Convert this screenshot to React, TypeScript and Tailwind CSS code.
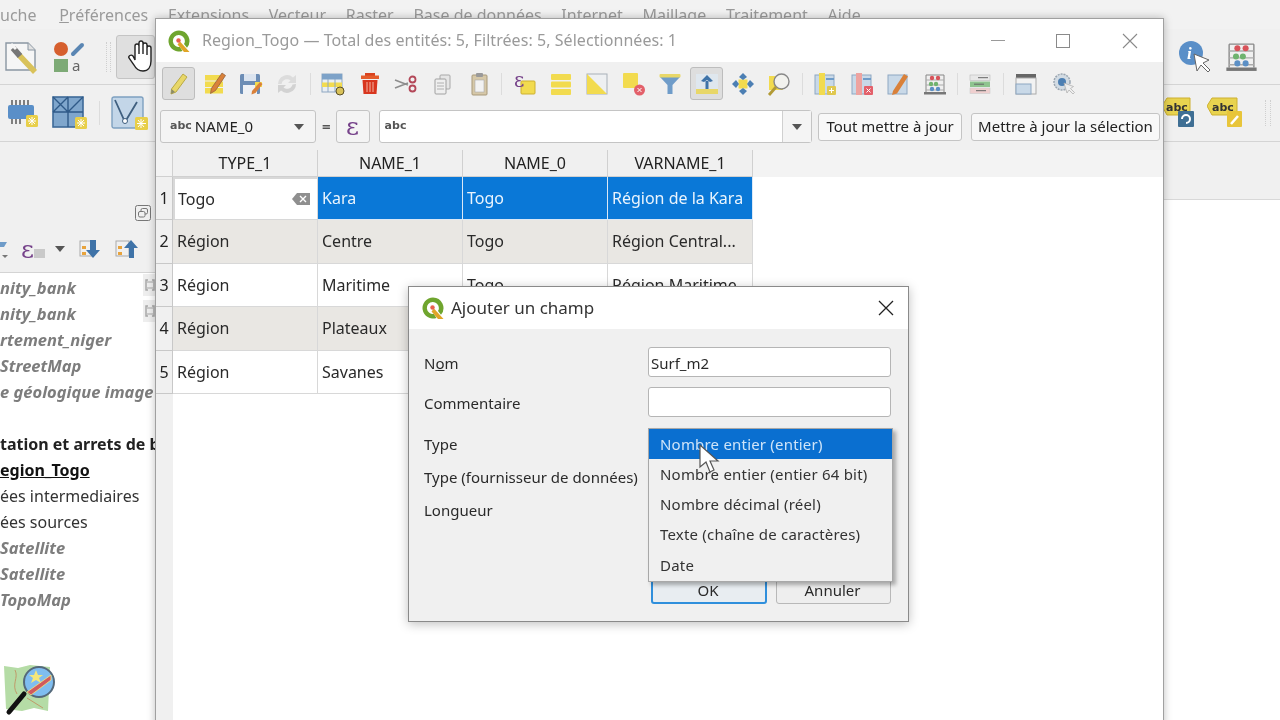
import type { ReactNode } from 'react';

const FONT = "font-['Noto_Sans','Open_Sans',sans-serif]";

function QgisLogo({ size }: { size: number }) {
  return (
    <svg width={size} height={size} viewBox="0 0 24 24" className="shrink-0">
      <path d="M12 1.5a10.5 10.5 0 1 0 3.5 20.4l-2.6-4a6 6 0 1 1 5-5.9c0 1.2-.3 2.2-.9 3.1l3 3.6A10.5 10.5 0 0 0 12 1.5Z" fill="#6fa52e" />
      <path d="M13 12.5l9.5 10.5h-5.5l-6.5-7.5Z" fill="#e0a526" />
      <circle cx="11.5" cy="11.5" r="2.2" fill="#e8604c" />
    </svg>
  );
}

function Ico({ w = 24, children }: { w?: number; children: ReactNode }) {
  return (
    <svg width={w} height={w} viewBox="0 0 24 24" className="shrink-0">
      {children}
    </svg>
  );
}

const Pencil = () => (
  <Ico>
    <path d="M17 2l4 3-11 15-5 2 .5-5Z" fill="#e8d768" stroke="#b9a945" strokeWidth="1" />
    <path d="M5.5 17l3.5 3-4 2Z" fill="#8a8a6a" />
  </Ico>
);
const EditRows = () => (
  <Ico>
    <rect x="2" y="3" width="18" height="5.5" fill="#f2db4f" />
    <rect x="2" y="9.5" width="18" height="5.5" fill="#f2db4f" />
    <rect x="2" y="16" width="18" height="5.5" fill="#f2db4f" />
    <path d="M19 1l3.5 2.5-10 15-5 3 .8-5Z" fill="#d9813a" stroke="#8a5a3a" strokeWidth="0.7" />
  </Ico>
);
const SaveEdit = () => (
  <Ico>
    <rect x="1" y="2" width="20" height="20" rx="1.5" fill="#6c8db5" />
    <rect x="5" y="2" width="12" height="7" fill="#dbe4ef" />
    <rect x="4" y="13" width="14" height="9" fill="#eef1f5" />
    <rect x="16" y="10" width="7" height="5" fill="#f2db4f" />
    <path d="M21 10l2.5 2-7 9-4 1.5.5-3.5Z" fill="#d9813a" />
  </Ico>
);
const Reload = () => (
  <Ico>
    <path d="M3 12a9 9 0 0 1 15-6.5l3-2.500v8h-8l2.500-2.500A5.500 5.500 0 0 0 6.500 12Z" fill="#dcdcdc" />
    <path d="M21 12a9 9 0 0 1-15 6.500l-3 2.500v-8h8l-2.500 2.500a5.500 5.500 0 0 0 9-3Z" fill="#d2d2d2" />
  </Ico>
);
const NewFeature = () => (
  <Ico>
    <rect x="1" y="2" width="20" height="18" fill="#e9eef3" stroke="#8ea7c2" />
    <rect x="1" y="2" width="20" height="5.5" fill="#7da2c8" />
    <rect x="1" y="10.5" width="20" height="4.5" fill="#f2db4f" />
    <path d="M7 7v13M14 7v13" stroke="#8ea7c2" />
    <circle cx="19" cy="19" r="4" fill="#d9c25a" stroke="#5a4f25" />
  </Ico>
);
const Trash = () => (
  <Ico>
    <rect x="7" y="1" width="10" height="3" fill="#d9421f" />
    <rect x="3" y="3.5" width="18" height="3.5" fill="#e45c2c" />
    <path d="M4.5 8h15l-1 14h-13Z" fill="#d8361f" />
    <path d="M9 10v10M12 10v10M15 10v10" stroke="#f3b5a5" />
  </Ico>
);
const Scissors = () => (
  <Ico>
    <path d="M1 8l13 5M1 16l13-5" stroke="#8d8d8d" strokeWidth="1.6" />
    <circle cx="18.5" cy="7.5" r="3" fill="none" stroke="#b34758" strokeWidth="1.8" />
    <circle cx="18.5" cy="16.5" r="3" fill="none" stroke="#b34758" strokeWidth="1.8" />
  </Ico>
);
const Copy = () => (
  <Ico>
    <rect x="10" y="3" width="10" height="14" rx="1" fill="#e6e6e6" stroke="#a8a8a8" />
    <rect x="5" y="7" width="11" height="15" rx="1" fill="#efefef" stroke="#a0a0a0" />
    <path d="M7 11h7M7 14h7M7 17h7" stroke="#b0b0b0" />
  </Ico>
);
const Paste = () => (
  <Ico>
    <rect x="5" y="3" width="15" height="20" rx="1" fill="#d6c8a8" stroke="#a8997a" />
    <rect x="8" y="8" width="9" height="12" fill="#f2f2f2" stroke="#aaa" strokeWidth="0.6" />
    <rect x="9" y="1" width="7" height="4" rx="1" fill="#9a9a9a" />
  </Ico>
);
const Expr = () => (
  <Ico>
    <rect x="8" y="9" width="14" height="13" rx="1" fill="#f2db4f" stroke="#cdb030" />
    <text x="1" y="15" fontSize="20" fontFamily="DejaVu Serif, serif" fill="#76428a">
      ε
    </text>
  </Ico>
);
const AllRows = () => (
  <Ico>
    <rect x="2" y="2" width="20" height="6" rx="1" fill="#f2db4f" />
    <rect x="2" y="9.5" width="20" height="6" rx="1" fill="#f2db4f" />
    <rect x="2" y="17" width="20" height="6" rx="1" fill="#f2db4f" />
  </Ico>
);
const Invert = () => (
  <Ico>
    <rect x="2" y="2" width="20" height="20" fill="#eef0f2" stroke="#a8b0b8" />
    <path d="M2 2l20 20H2Z" fill="#f2db4f" />
  </Ico>
);
const Deselect = () => (
  <Ico>
    <rect x="1" y="1" width="15" height="15" rx="1" fill="#f2db4f" />
    <circle cx="17.5" cy="18" r="5.5" fill="#e3606a" />
    <path d="M15.5 16l4 4M19.5 16l-4 4" stroke="#fff" />
  </Ico>
);
const Funnel = () => (
  <Ico>
    <path d="M2 5h20l-7.5 8v9h-5v-9Z" fill="#6f9cc9" />
    <rect x="1.5" y="2" width="21" height="3.5" rx="1" fill="#e8d768" />
  </Ico>
);
const MoveTop = () => (
  <Ico>
    <rect x="1" y="2" width="22" height="20" fill="#dfe7ee" />
    <rect x="1" y="17" width="22" height="5" fill="#e8d768" />
    <path d="M10.5 9h3v8h-3Z" fill="#3f73a8" />
    <path d="M12 3l6 6-3 1-3-2-3 2-3-1Z" fill="#3f73a8" />
  </Ico>
);
const PanTo = () => (
  <Ico>
    <rect x="7.5" y="7.5" width="9" height="9" fill="#f2db4f" />
    <path d="M12 1l4 4-4 3-4-3ZM12 23l-4-4 4-3 4 3ZM1 12l4-4 3 4-3 4ZM23 12l-4 4-3-4 3-4Z" fill="#4c7fb3" />
  </Ico>
);
const Zoom = () => (
  <Ico>
    <rect x="2" y="4" width="14" height="14" fill="#f2db4f" />
    <circle cx="14.5" cy="9.5" r="7.5" fill="#f2f2ee" stroke="#888" strokeWidth="1.4" />
    <path d="M9 15l-7 8" stroke="#b29a35" strokeWidth="2.8" />
  </Ico>
);
const Badge = ({ c }: { c: string }) => <rect x="14" y="14" width="9" height="9" rx="1" fill={c} />;
const NewField = () => (
  <Ico>
    <rect x="2" y="3" width="19" height="19" fill="#c9d9e8" stroke="#8ea7c2" />
    <rect x="6" y="1" width="6" height="22" fill="#f2db4f" />
    <path d="M13 7h8" stroke="#6f9cc9" strokeWidth="2" />
    <Badge c="#e0c84f" />
    <path d="M18.5 16v5M16 18.5h5" stroke="#fff" />
  </Ico>
);
const DelField = () => (
  <Ico>
    <rect x="2" y="3" width="19" height="19" fill="#c9d9e8" stroke="#8ea7c2" />
    <rect x="6" y="1" width="6" height="22" fill="#eda3a0" />
    <path d="M13 7h8" stroke="#6f9cc9" strokeWidth="2" />
    <Badge c="#e3606a" />
    <path d="M16.5 16.5l4 4M20.5 16.5l-4 4" stroke="#fff" />
  </Ico>
);
const Calc = () => (
  <Ico>
    <rect x="2" y="3" width="19" height="19" fill="#c9d9e8" stroke="#8ea7c2" />
    <path d="M7 19l11-17 4 2.5-11 17-5 1.5Z" fill="#d9813a" />
  </Ico>
);
const Abacus = ({ w = 24 }: { w?: number }) => (
  <Ico w={w}>
    <path d="M3 3v17M21 3v17M3 3h18" stroke="#888" fill="none" />
    <path d="M3 8h18M3 13h18M3 18h18" stroke="#aaa" />
    <circle cx="9" cy="6" r="2.2" fill="#d8535a" />
    <circle cx="15" cy="6" r="2.2" fill="#d8535a" />
    <circle cx="8" cy="12" r="2.2" fill="#6fb36f" />
    <circle cx="13" cy="12" r="2.2" fill="#6fb36f" />
    <circle cx="9" cy="17" r="2.2" fill="#5b8fc5" />
    <circle cx="15" cy="17" r="2.2" fill="#5b8fc5" />
    <rect x="1" y="20" width="22" height="2.5" fill="#777" />
  </Ico>
);
const Conditional = () => (
  <Ico>
    <rect x="2" y="3" width="20" height="5.5" fill="#e8e8e8" stroke="#bbb" strokeWidth="0.6" />
    <rect x="2" y="9.5" width="20" height="5.5" fill="#8fc48f" />
    <rect x="2" y="16" width="20" height="5.5" fill="#efcfcf" stroke="#ccc" strokeWidth="0.6" />
    <path d="M10 5.7h10M6 12.2h10M8 18.7h10" stroke="#666" />
  </Ico>
);
const Dock = () => (
  <Ico>
    <rect x="2" y="2" width="20" height="4" fill="#666" />
    <rect x="2" y="6" width="20" height="16" fill="#f2f2f2" stroke="#aaa" />
    <rect x="2" y="12" width="15" height="10" fill="#c9d9e8" stroke="#8ea7c2" />
  </Ico>
);
const Actions = () => (
  <Ico>
    <circle cx="11" cy="10" r="8" fill="#d2dbe3" stroke="#9aa5b0" strokeDasharray="2 1" strokeWidth="1.5" />
    <circle cx="11" cy="10" r="4" fill="#4c7fb3" />
    <path d="M13 11l3 10 2-3 4 4 1.5-1.5-4-4 3-2Z" fill="#eee" stroke="#aaa" strokeWidth="0.7" />
  </Ico>
);

// one toolbar cell of the attribute window
const Slot = ({ on, children }: { on?: boolean; children: ReactNode }) => (
  <div className="flex h-[33px] w-[36.4px] shrink-0 items-center justify-center">
    {on ? (
      <div className="flex h-[33px] w-[33px] items-center justify-center rounded-[3px] border border-[#bdbdbd] bg-[#dedede]">{children}</div>
    ) : (
      children
    )}
  </div>
);
const Sep = () => (
  <div className="flex w-[9.5px] shrink-0 justify-center">
    <div className="h-[22px] w-px bg-[#dcdcdc]" />
  </div>
);

function MainToolIcons() {
  return (
    <>
      <div className="flex h-[56px] items-center border-b border-[#d4d4d4] pl-[5px]">
        <svg width="33" height="34" viewBox="0 0 33 34" className="shrink-0">
          <path d="M1 3h22l7 7v20H1Z" fill="#f6f6f6" stroke="#8a96a2" strokeWidth="1.4" />
          <path d="M23 3v7h7" fill="#e2e2e2" stroke="#8a96a2" />
          <path d="M14 15l16 17" stroke="#d9c25a" strokeWidth="5.5" />
          <path d="M8 8l7 8" stroke="#777" strokeWidth="6" />
          <path d="M6 4l5 5" stroke="#f6f6f6" strokeWidth="3" />
        </svg>
        <svg width="32" height="34" viewBox="0 0 32 34" className="ml-[15px] shrink-0">
          <circle cx="8" cy="9" r="7" fill="#d65f2e" />
          <rect x="1" y="19" width="14" height="13" fill="#7daa76" />
          <path d="M20 14l9-9" stroke="#5a86b3" strokeWidth="4" strokeLinecap="round" />
          <text x="19" y="31" fontSize="15" fill="#666" fontFamily="Noto Sans, sans-serif">
            a
          </text>
        </svg>
        <div className="ml-[21px] h-[30px] w-[7px] border-x border-dotted border-[#cfcfcf]" />
        <div className="ml-[5px] flex h-[44px] w-[50px] items-center rounded-[3px] border border-[#c4c4c4] bg-[#dfdfdf] pl-[9px]">
          <svg width="28" height="34" viewBox="0 0 28 34">
            <path
              d="M9 20V6a2 2 0 0 1 4 0v8V3a2 2 0 0 1 4 0v11V5a2 2 0 0 1 4 0v10V8a2 2 0 0 1 4 0v13c0 6-3 10-8 10-5 0-7-2-9-6l-5-7c-1-2 2-4 4-2Z"
              fill="#fff"
              stroke="#222"
              strokeWidth="1.4"
            />
          </svg>
        </div>
      </div>
      <div className="flex h-[57px] items-center border-b border-[#d4d4d4] pl-[7px]">
        <svg width="32" height="30" viewBox="0 0 32 30" className="shrink-0">
          <rect x="1" y="7" width="26" height="14" rx="2" fill="#5a8fc8" />
          <path d="M5 2v5M9 2v5M13 2v5M17 2v5M21 2v5M5 21v5M9 21v5M13 21v5" stroke="#444" strokeWidth="1.3" />
          <rect x="19" y="17" width="12" height="12" rx="1.5" fill="#e8cf4a" />
          <path d="M25 19v8M21 23h8M22 20l6 6M28 20l-6 6" stroke="#fff" />
        </svg>
        <svg width="36" height="34" viewBox="0 0 36 34" className="ml-[13px] shrink-0">
          <rect x="1" y="1" width="30" height="30" fill="#7fa6cc" stroke="#3e6a98" strokeWidth="1.6" />
          <path d="M1 16h30M16 1v30M1 1l15 15M16 1L1 16M31 1L16 16" stroke="#2f5a88" strokeWidth="1.4" />
          <rect x="23" y="21" width="12" height="12" rx="1.5" fill="#e8cf4a" />
          <path d="M29 23v8M25 27h8M26 24l6 6M32 24l-6 6" stroke="#fff" />
        </svg>
        <div className="ml-[11px] h-[24px] w-px bg-[#dcdcdc]" />
        <svg width="38" height="34" viewBox="0 0 38 34" className="ml-[11px] shrink-0">
          <rect x="1" y="1" width="31" height="31" rx="2" fill="#c3d6e8" stroke="#7ea0c0" strokeWidth="1.4" />
          <path d="M4 4l10 22L26 6" fill="none" stroke="#3f5f7f" strokeWidth="1.8" />
          <circle cx="14" cy="25" r="2.5" fill="#fff" stroke="#3f5f7f" />
          <rect x="24" y="21" width="13" height="13" rx="1.5" fill="#e8cf4a" />
          <path d="M30 23v9M26 27.5h9M27 24l6 7M33 24l-6 7" stroke="#fff" />
        </svg>
      </div>
    </>
  );
}

const GREY = 'text-[16.5px] italic font-bold text-[#7d7d7d]';
const LAYERS = [
  { t: 'nity_bank', c: GREY, mark: true },
  { t: 'nity_bank', c: GREY, mark: true },
  { t: 'rtement_niger', c: GREY },
  { t: 'StreetMap', c: GREY },
  { t: 'e géologique image', c: GREY },
  { t: '', c: '' },
  { t: 'tation et arrets de b', c: 'text-[16px] font-bold text-[#222]' },
  { t: 'egion_Togo', c: 'text-[16px] font-bold text-[#111] underline' },
  { t: 'ées intermediaires', c: 'text-[16px] text-[#333]' },
  { t: 'ées sources', c: 'text-[16px] text-[#333]' },
  { t: 'Satellite', c: GREY },
  { t: 'Satellite', c: GREY },
  { t: 'TopoMap', c: GREY },
];

function LayerPanel() {
  return (
    <div className="flex h-[578px] w-[155px] flex-col overflow-hidden">
      <div className="flex h-[131px] flex-col border-b border-[#d4d4d4] bg-[#f0f0f0] pt-[63px]">
        <svg width="16" height="16" viewBox="0 0 16 16" className="mr-[4px] self-end">
          <rect x="0.5" y="0.5" width="15" height="15" rx="2" fill="none" stroke="#777" />
          <rect x="6" y="3.5" width="6.5" height="5.5" rx="1.5" fill="none" stroke="#777" />
          <rect x="3.5" y="6.5" width="6.5" height="5.5" rx="1.5" fill="#f0f0f0" stroke="#777" />
        </svg>
        <div className="mt-[16px] flex h-[24px] items-center">
          <svg width="21" height="24" viewBox="0 0 21 24" className="shrink-0">
            <path d="M0 5h7L4 10H0Z" fill="#6f9cc9" />
            <path d="M2 18h6l-3 3Z" fill="#777" />
          </svg>
          <span className="font-['DejaVu_Serif',serif] text-[25px] leading-none text-[#76428a]">ε</span>
          <svg width="12" height="12" viewBox="0 0 12 12" className="mt-[8px] shrink-0">
            <rect x="0" y="2" width="11" height="9" fill="#c9c9c9" />
          </svg>
          <span className="ml-[9px] h-0 w-0 border-x-[5px] border-t-[6px] border-x-transparent border-t-[#555]" />
          <svg width="24" height="24" viewBox="0 0 24 24" className="ml-[13px] shrink-0">
            <rect x="2" y="4" width="13" height="15" fill="none" stroke="#aaa" />
            <rect x="4" y="9" width="4" height="3" fill="#e8a33c" />
            <rect x="4" y="15" width="4" height="3" fill="#e8a33c" />
            <path d="M12 3h6v10h4l-7 8-7-8h4Z" fill="#3f73a8" />
          </svg>
          <svg width="24" height="24" viewBox="0 0 24 24" className="ml-[12px] shrink-0">
            <rect x="2" y="4" width="13" height="15" fill="none" stroke="#aaa" />
            <rect x="4" y="9" width="4" height="3" fill="#e8a33c" />
            <rect x="4" y="15" width="4" height="3" fill="#e8a33c" />
            <path d="M15 21h5V11h4l-7-8-7 8h5Z" fill="#3f73a8" />
          </svg>
        </div>
      </div>
      <div className="flex-1 bg-white pt-[1px]">
        {LAYERS.map((l, i) => (
          <div key={i} className={`flex h-[26px] justify-between overflow-hidden whitespace-nowrap pt-[1px] leading-[26px] ${l.c}`}>
            {l.t}
            {l.mark && (
              <svg width="12" height="22" viewBox="0 0 12 22" className="-mt-[1px] shrink-0">
                <rect width="12" height="22" fill="#eeeeee" />
                <path d="M5 6H3v10h2M9 6h2v10H9" fill="none" stroke="#a8a8a8" strokeWidth="1.5" />
                <path d="M4 8h6M4 14h6" stroke="#a8a8a8" />
              </svg>
            )}
          </div>
        ))}
      </div>
    </div>
  );
}

const COLS = ['TYPE_1', 'NAME_1', 'NAME_0', 'VARNAME_1'];
const ROWS = [
  ['Togo', 'Kara', 'Togo', 'Région de la Kara'],
  ['Région', 'Centre', 'Togo', 'Région Central...'],
  ['Région', 'Maritime', 'Togo', 'Région Maritime'],
  ['Région', 'Plateaux', 'Togo', 'Région des Plateaux'],
  ['Région', 'Savanes', 'Togo', 'Région des Savanes'],
];

function AttributeTable() {
  return (
    <div className="flex h-full flex-col">
      <div className="flex h-[26.5px] shrink-0 items-stretch bg-[#f3f3f3]">
        <div className="w-[17px] border-r border-b border-[#d0d0d0]" />
        {COLS.map((c) => (
          <div key={c} className="flex w-[145px] items-center justify-center border-r border-b border-[#d0d0d0] bg-[#f0f0f0] text-[16px] text-[#222]">
            {c}
          </div>
        ))}
      </div>
      {ROWS.map((r, i) => (
        <div key={i} className="flex h-[43.5px] shrink-0">
          <div className="flex w-[17px] items-center justify-center border-r border-b border-[#c8c8c8] bg-[#f0f0f0] text-[16px] text-[#222]">{i + 1}</div>
          {r.map((v, j) => {
            const sel = i === 0 && j > 0;
            const edit = i === 0 && j === 0;
            return (
              <div
                key={j}
                className={`flex w-[145px] items-center justify-between overflow-hidden whitespace-nowrap border-r border-b px-[4px] text-[16px] ${
                  sel ? 'border-[#dbe8f6] bg-[#0a78d7] text-[#eaf4fd]' : 'border-[#d8d8d8] text-[#2a2a2a]'
                } ${i % 2 && !sel ? 'bg-[#e9e7e3]' : ''} ${edit ? 'border-2 border-[#0a78d7] bg-white pl-[3px]' : ''}`}
              >
                {v}
                {edit && (
                  <svg width="20" height="14" viewBox="0 0 20 14" className="mr-[2px] shrink-0">
                    <path d="M6 1h13v12H6L1 7Z" fill="#8f8f8f" />
                    <path d="M9 4l6 6M15 4l-6 6" stroke="#fff" strokeWidth="1.4" />
                  </svg>
                )}
              </div>
            );
          })}
        </div>
      ))}
      <div className="flex flex-1">
        <div className="w-[17px] bg-[#f0f0f0]" />
        <div className="flex-1 bg-white" />
      </div>
    </div>
  );
}

function AddFieldDialog() {
  return (
    <div className="absolute left-[408px] top-[286px] z-20 h-[336px] w-[501px] border border-[#8a8a8a] bg-[#f0f0f0] shadow-[0_2px_10px_rgba(0,0,0,0.25)]">
      <div className="flex h-[42px] items-center bg-white pl-[12px] pr-[14px]">
        <QgisLogo size={24} />
        <span className="ml-[6px] text-[17px] text-[#333]">Ajouter un champ</span>
        <svg width="16" height="16" viewBox="0 0 16 16" className="ml-auto">
          <path d="M1 1l14 14M15 1L1 15" stroke="#222" strokeWidth="1.3" />
        </svg>
      </div>
      <div className="relative flex h-[292px] flex-col pl-[15px] pr-[17px] pt-[18px] text-[15px] text-[#2a2a2a]">
        <div className="flex h-[30px] items-center justify-between">
          <span className="pt-[2px]">
            N<span className="underline">o</span>m
          </span>
          <div className="flex h-[30px] w-[243px] items-center rounded-[3px] border border-[#b5b5b5] bg-white pl-[2px] pt-[2px]">Surf_m2</div>
        </div>
        <div className="mt-[10px] flex h-[30px] items-center justify-between">
          <span className="pt-[2px]">Commentaire</span>
          <div className="h-[30px] w-[243px] rounded-[3px] border border-[#b5b5b5] bg-white" />
        </div>
        <div className="mt-[11px] flex h-[30px] items-center pt-[2px]">Type</div>
        <div className="mt-[4px] flex h-[30px] items-center">Type (fournisseur de données)</div>
        <div className="mt-[3px] flex h-[30px] items-center">Longueur</div>
        <div className="mt-auto mb-[17px] flex justify-end gap-[9px]">
          <div className="flex h-[28px] w-[116px] items-center justify-center rounded-[3px] border-2 border-[#2f8fdc] bg-[#e8edf1] pr-[2px]">OK</div>
          <div className="flex h-[28px] w-[115px] items-center justify-center rounded-[3px] border border-[#b8b8b8] bg-[#eeeeee] pr-[2px]">Annuler</div>
        </div>
      </div>
    </div>
  );
}

const TYPES = ['Nombre entier (entier)', 'Nombre entier (entier 64 bit)', 'Nombre décimal (réel)', 'Texte (chaîne de caractères)', 'Date'];

function TypeMenu() {
  return (
    <div className="absolute left-[648px] top-[428px] z-30 w-[245px] border border-[#a8a8a8] bg-[#f0f0f0] pb-[1px] shadow-[3px_3px_4px_rgba(0,0,0,0.3)]">
      {TYPES.map((t, i) => (
        <div
          key={t}
          className={`flex h-[30.2px] items-center whitespace-nowrap pl-[11px] text-[15px] tracking-[0.2px] ${
            i === 0 ? 'bg-[#0a6fd0] text-[#cfe4f8]' : 'text-[#333]'
          }`}
        >
          {t}
        </div>
      ))}
    </div>
  );
}

export default function App() {
  return (
    <div className={`relative h-[720px] w-[1280px] overflow-hidden bg-white blur-[0.5px] ${FONT}`}>
      {/* main QGIS window */}
      <div className="flex h-[29px] items-center gap-[19.7px] whitespace-nowrap bg-[#f2f2f2] text-[16px] text-[#9a9a9a]">
        <span>uche</span>
        <span className="ml-[3px]">
          <span className="underline">P</span>références
        </span>
        <span>Extensions</span>
        <span>Vecteur</span>
        <span>Raster</span>
        <span>Base de données</span>
        <span>Internet</span>
        <span>Maillage</span>
        <span>Traitement</span>
        <span>Aide</span>
      </div>
      <div className="flex">
        <div className="w-[155px] bg-[#f0f0f0]">
          <MainToolIcons />
        </div>
        <div className="flex-1">
          <div className="flex h-[56px] items-center justify-end border-b border-[#d4d4d4] bg-[#f0f0f0] pr-[22px]">
            <svg width="38" height="36" viewBox="0 0 38 36">
              <circle cx="14" cy="14" r="12" fill="#5a8fc8" />
              <text x="10" y="20" fontSize="17" fontStyle="italic" fontWeight="bold" fill="#fff" fontFamily="Liberation Serif, serif">
                i
              </text>
              <path d="M17 15l3 17 4-6 7 7 2-2-7-7 6-3Z" fill="#fff" stroke="#666" />
            </svg>
            <div className="ml-[10px]">
              <Abacus w={33} />
            </div>
          </div>
          <div className="flex h-[57px] items-center justify-end border-b border-[#d4d4d4] bg-[#f0f0f0] pr-[9px]">
            <svg width="34" height="32" viewBox="0 0 34 32">
              <path d="M5 1h23v17H5L0 9Z" fill="#e8d34f" stroke="#cdb030" />
              <text x="4" y="14" fontSize="11" fontWeight="bold" fill="#333" fontFamily="DejaVu Sans, sans-serif">
                abc
              </text>
              <rect x="16" y="14" width="16" height="16" rx="1" fill="#3f6f94" />
              <path d="M20 22a4 4 0 1 1 4 4" fill="none" stroke="#fff" strokeWidth="2" />
            </svg>
            <svg width="36" height="32" viewBox="0 0 36 32" className="ml-[11px]">
              <path d="M5 1h25v17H5L0 9Z" fill="#e8d34f" stroke="#cdb030" />
              <text x="5" y="14" fontSize="11" fontWeight="bold" fill="#333" fontFamily="DejaVu Sans, sans-serif">
                abc
              </text>
              <rect x="20" y="14" width="15" height="16" rx="1" fill="#e8c53a" />
              <path d="M24 27l7-8" stroke="#fff" strokeWidth="2.5" />
            </svg>
            <div className="ml-[22px] h-[26px] w-[6px] border-x border-dotted border-[#cfcfcf]" />
          </div>
        </div>
      </div>
      <div className="flex">
        <LayerPanel />
        <div className="flex-1">
          <div className="ml-[1008px] h-[58px] border-b border-[#d8d8d8] bg-[#f0f0f0]" />
        </div>
      </div>

      {/* attribute table window */}
      <div className="absolute left-[155px] top-[18px] z-10 flex h-[710px] w-[1009px] flex-col border border-[#a0a0a0] bg-white shadow-[0_0_8px_rgba(0,0,0,0.25)]">
        <div className="flex h-[43px] shrink-0 items-center bg-white pl-[11px] text-[16px] text-[#9a9a9a]">
          <QgisLogo size={24} />
          <span className="ml-[11px] whitespace-nowrap pb-[2px] tracking-[0.06px]">Region_Togo — Total des entités: 5, Filtrées: 5, Sélectionnées: 1</span>
          <div className="ml-auto flex items-center">
            <div className="h-px w-[14px] bg-[#9a9a9a]" />
            <div className="ml-[51px] h-[14px] w-[14px] border border-[#8a8a8a]" />
            <svg width="16" height="16" viewBox="0 0 16 16" className="ml-[52px] mr-[25px]">
              <path d="M1 1l14 14M15 1L1 15" stroke="#8a8a8a" strokeWidth="1.1" />
            </svg>
          </div>
        </div>
        <div className="flex h-[43px] shrink-0 items-center bg-[#f0f0f0] pl-[4px]">
          <Slot on>
            <Pencil />
          </Slot>
          <Slot>
            <EditRows />
          </Slot>
          <Slot>
            <SaveEdit />
          </Slot>
          <Slot>
            <Reload />
          </Slot>
          <Sep />
          <Slot>
            <NewFeature />
          </Slot>
          <Slot>
            <Trash />
          </Slot>
          <Slot>
            <Scissors />
          </Slot>
          <Slot>
            <Copy />
          </Slot>
          <Slot>
            <Paste />
          </Slot>
          <Sep />
          <Slot>
            <Expr />
          </Slot>
          <Slot>
            <AllRows />
          </Slot>
          <Slot>
            <Invert />
          </Slot>
          <Slot>
            <Deselect />
          </Slot>
          <Slot>
            <Funnel />
          </Slot>
          <Slot on>
            <MoveTop />
          </Slot>
          <Slot>
            <PanTo />
          </Slot>
          <Slot>
            <Zoom />
          </Slot>
          <Sep />
          <Slot>
            <NewField />
          </Slot>
          <Slot>
            <DelField />
          </Slot>
          <Slot>
            <Calc />
          </Slot>
          <Slot>
            <Abacus />
          </Slot>
          <Sep />
          <Slot>
            <Conditional />
          </Slot>
          <Sep />
          <Slot>
            <Dock />
          </Slot>
          <Slot>
            <Actions />
          </Slot>
        </div>
        <div className="flex h-[45px] shrink-0 items-center bg-[#f0f0f0] pb-[2px] pl-[4px] text-[15px] text-[#222]">
          <div className="flex h-[33px] w-[156px] items-center rounded-[3px] border border-[#c4c4c4] bg-[#f4f4f4] pl-[9px]">
            <span className="font-['DejaVu_Sans',sans-serif] text-[11px] font-bold text-[#555]">abc</span>
            <span className="ml-[3px]">NAME_0</span>
            <span className="ml-auto mr-[11px] h-0 w-0 border-x-[5.5px] border-t-[6px] border-x-transparent border-t-[#555]" />
          </div>
          <span className="ml-[6px] font-bold text-[#555]">=</span>
          <div className="ml-[5px] flex h-[33px] w-[34px] items-center justify-center rounded-[3px] border border-[#c4c4c4] bg-[#f4f4f4] font-['DejaVu_Serif',serif] text-[25px] leading-none text-[#76428a]">
            ε
          </div>
          <div className="ml-[9px] flex h-[33px] flex-1 items-center rounded-[3px] border border-[#c4c4c4] bg-white pl-[5px]">
            <span className="font-['DejaVu_Sans',sans-serif] text-[11px] font-bold text-[#555]">abc</span>
            <div className="ml-auto flex h-full w-[29px] items-center justify-center border-l border-[#d0d0d0] bg-[#f4f4f4]">
              <span className="h-0 w-0 border-x-[5.5px] border-t-[6px] border-x-transparent border-t-[#555]" />
            </div>
          </div>
          <div className="ml-[6px] flex h-[28px] w-[144px] items-center justify-center whitespace-nowrap rounded-[3px] border border-[#c4c4c4] bg-[#f8f8f8]">
            Tout mettre à jour
          </div>
          <div className="ml-[9px] mr-[3px] flex h-[28px] w-[189px] items-center justify-center whitespace-nowrap rounded-[3px] border border-[#c4c4c4] bg-[#f8f8f8]">
            Mettre à jour la sélection
          </div>
        </div>
        <div className="min-h-0 flex-1 bg-white">
          <AttributeTable />
        </div>
      </div>

      <AddFieldDialog />
      <TypeMenu />

      {/* corner map logo */}
      <svg width="54" height="54" viewBox="0 0 54 54" className="absolute left-[3px] top-[662px]">
        <path d="M1 4l14 2 12-3 20 2-2 44-14-3-12 3-16-2Z" fill="#b5dca6" />
        <path d="M12 8c4 8-4 14 2 24M24 36l16 10" fill="none" stroke="#c09a6a" />
        <path d="M6 50L21 32" stroke="#111" strokeWidth="5" strokeLinecap="round" />
        <circle cx="36" cy="20" r="15" fill="#7fbdf0" stroke="#55697a" strokeWidth="2" />
        <path d="M24 30l24-17v5L28 33Z" fill="#d05a5f" stroke="#f5e77a" strokeWidth="0.8" />
        <path d="M33 8l2 5h5l-4 3 2 5-5-3-5 3 2-5-4-3h5Z" fill="#f5e77a" />
      </svg>

      {/* cursor */}
      <svg width="22" height="30" viewBox="0 0 22 30" className="absolute left-[699px] top-[444px] z-40">
        <path d="M1 1v22l6-5 4 10 4-2-4-9h8Z" fill="#fff" stroke="#555" strokeWidth="1.2" />
      </svg>
    </div>
  );
}
